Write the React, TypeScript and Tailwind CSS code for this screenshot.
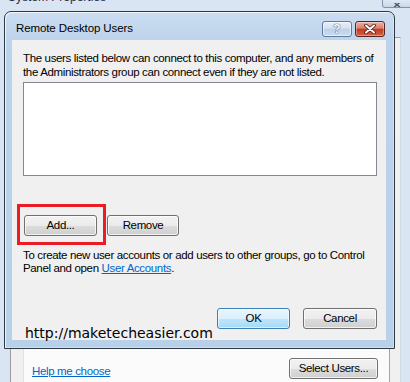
const btn =
  "flex h-[21px] items-center justify-center rounded-[3px] border border-[#707070] bg-[linear-gradient(#f2f2f2,#ebebeb_50%,#dddddd_50%,#cfcfcf)] shadow-[inset_0_0_0_1px_rgba(255,255,255,0.7)] leading-none text-black";

const okBtn =
  "flex h-[21px] items-center justify-center rounded-[3px] border border-[#3c7fb1] bg-[linear-gradient(#eaf6fd,#d9f0fc_50%,#bee6fd_50%,#a7d9f5)] shadow-[inset_0_0_0_1px_rgba(255,255,255,0.6)] leading-none text-black";

export default function App() {
  return (
    <div className="relative h-[382px] w-[410px] overflow-hidden bg-[#dae5f3] font-['Liberation_Sans',Arial,sans-serif] text-[11.5px] tracking-[-0.35px] text-black">
      {/* System Properties window, behind */}
      <div className="flex h-full flex-col">
        <div className="flex h-[37px] shrink-0 items-start justify-between pl-[8px]">
          <span className="-mt-[9px] text-[12px] leading-[12px] tracking-normal text-[#1d2c3d]">
            System Properties
          </span>
          <div className="mr-[-2px] flex h-[8px] w-[30px] items-end justify-center rounded-b-[3px] border border-t-0 border-[#7f93ad] bg-[linear-gradient(#dfe8f3,#cbd8e8)]">
            <svg width="12" height="4" viewBox="0 0 12 4">
              <path d="M2 -2 L6 2 L10 -2 M3 4 L6 2 L9 4" stroke="#4b5d74" strokeWidth="1.5" fill="none" />
            </svg>
          </div>
        </div>
        <div className="ml-[10px] mr-[9px] flex flex-1 border-l border-r border-t border-l-[#9d9d9d] border-r-[#d3d9e0] border-t-[#9d9d9d] bg-[#f0f0f0] pl-[12px] pr-[10px]">
          <div className="flex flex-1 items-end justify-between border-l border-r border-l-[#dde3ea] border-r-[#a3a3a3] bg-[#fbfbfb] pb-[3px] pl-[8px] pr-[11px]">
            <a href="#" className="mb-[1px] leading-[14px] text-[#0066cc] underline">
              Help me choose
            </a>
            <button className={`${btn} w-[89px]`}>Select Users...</button>
          </div>
        </div>
      </div>

      {/* Remote Desktop Users dialog */}
      <div className="absolute left-[4px] top-[11px] flex h-[338px] w-[391px] flex-col rounded-t-[7px] border border-[#2e3946] bg-[linear-gradient(#cadcf1,#bdd3eb_30px,#b9d0e9)] shadow-[inset_1px_1px_0_rgba(255,255,255,0.75),inset_-1px_-1px_0_rgba(255,255,255,0.35)]">
        {/* title bar */}
        <div className="flex h-[28px] shrink-0 items-start justify-between pl-[11px] pr-[9px]">
          <span className="pt-[9px] leading-[14px] tracking-[-0.1px]">Remote Desktop Users</span>
          <div className="mt-[9px] flex gap-[3px]">
            <div className="flex h-[16px] w-[30px] items-center justify-center rounded-[3px] border border-[#5c7ba0] bg-[linear-gradient(#e6eef8,#d4e2f2_45%,#bcd1ea_50%,#c9dbef)] shadow-[inset_0_0_0_1px_rgba(255,255,255,0.55)]">
              <span className="text-[12px] font-bold leading-none tracking-normal text-white [text-shadow:0_0_1px_#2f4560,0_0_1px_#2f4560]">
                ?
              </span>
            </div>
            <div className="flex h-[16px] w-[30px] items-center justify-center rounded-[3px] border border-[#5a231b] bg-[linear-gradient(#eab0a2,#d9806b_45%,#c2391e_50%,#d0644a)] shadow-[inset_0_0_0_1px_rgba(255,255,255,0.35)]">
              <svg width="14" height="10" viewBox="0 0 14 10">
                <path d="M3 1.5 L11 8.5 M11 1.5 L3 8.5" stroke="#4a1a12" strokeWidth="3.6" strokeLinecap="round" />
                <path d="M3 1.5 L11 8.5 M11 1.5 L3 8.5" stroke="#ffffff" strokeWidth="2" strokeLinecap="round" />
              </svg>
            </div>
          </div>
        </div>

        {/* client area */}
        <div className="mb-[8px] ml-[7px] mr-[8px] flex h-[300px] flex-col bg-[#f0f0f0]">
          <p className="pl-[11px] pt-[11px] leading-[14px]">
            The users listed below can connect to this computer, and any members of
            <br />
            the Administrators group can connect even if they are not listed.
          </p>
          <div className="ml-[11px] mt-[3px] h-[94px] w-[354px] border border-[#828790] bg-white" />

          <div className="mt-[28px] flex items-start pl-[5px]">
            <div className="h-[41px] w-[89px] border-[3px] border-[#ec1c24] pl-[4px] pt-[8px]">
              <button className={`${btn} w-[73px]`}>Add...</button>
            </div>
            <button className={`${btn} ml-[1px] mt-[11px] w-[72px]`}>Remove</button>
          </div>

          <p className="mt-[4px] pl-[11px] leading-[13px]">
            To create new user accounts or add users to other groups, go to Control
            <br />
            Panel and open{" "}
            <a href="#" className="text-[#0066cc] underline">
              User Accounts
            </a>
            .
          </p>

          <div className="mt-auto flex justify-end gap-[13px] pb-[11px] pr-[9px]">
            <button className={`${okBtn} w-[73px]`}>OK</button>
            <button className={`${btn} w-[74px]`}>Cancel</button>
          </div>
        </div>
      </div>

      {/* watermark */}
      <span className="absolute left-[25px] top-[326px] font-['DejaVu_Sans',sans-serif] text-[14px] leading-[14px] tracking-normal text-black">
        http://maketecheasier.com
      </span>
    </div>
  );
}
